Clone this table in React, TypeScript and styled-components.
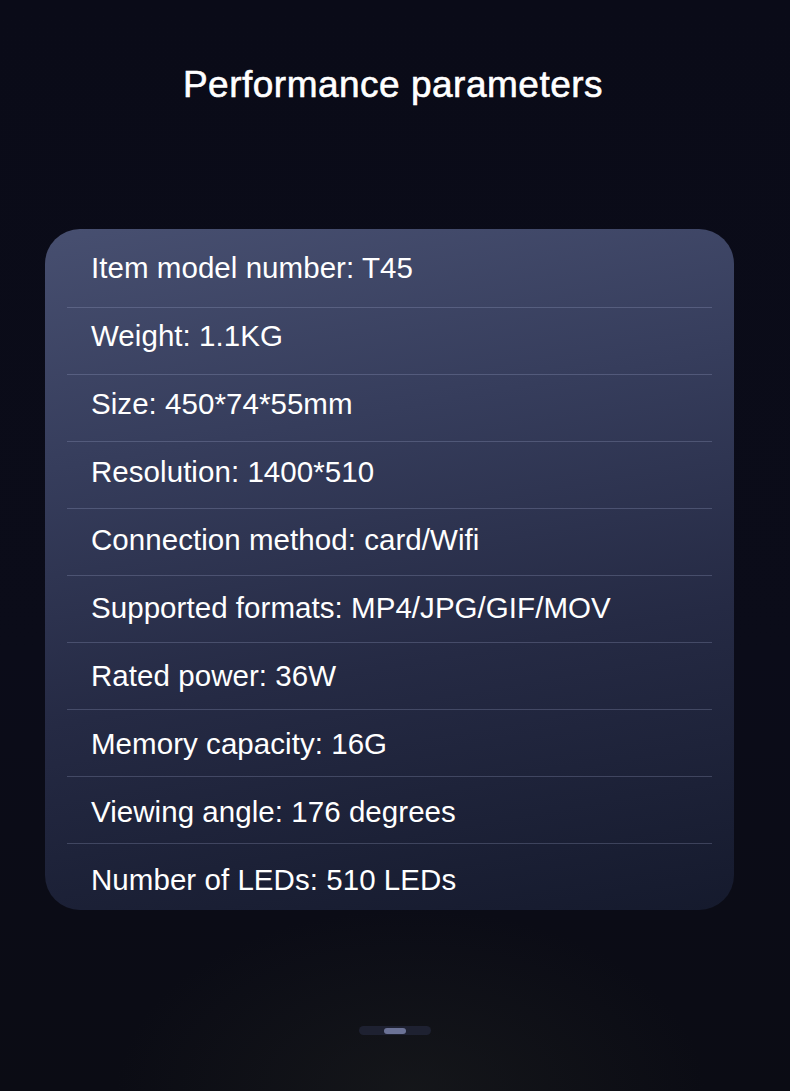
import React from "react";
import styled, { createGlobalStyle } from "styled-components";

const GlobalStyle = createGlobalStyle`
  html, body {
    margin: 0;
    padding: 0;
    background: #0a0b16;
  }
  * { box-sizing: border-box; }
`;

const Page = styled.div`
  width: 790px;
  height: 1091px;
  overflow: hidden;
  padding-top: 65px;
  display: flex;
  flex-direction: column;
  align-items: center;
  font-family: "Liberation Sans", Arial, sans-serif;
  background:
    radial-gradient(ellipse 420px 260px at 52% 100%, rgba(28, 30, 30, 0.55), rgba(0, 0, 0, 0) 70%),
    linear-gradient(180deg, #0a0b18 0%, #0b0c19 60%, #0b0c14 100%);
`;

const Title = styled.h1`
  margin: 0 0 0 -4px;
  font-size: 37px;
  line-height: 40px;
  font-weight: 400;
  color: #ffffff;
  letter-spacing: 0.5px;
  -webkit-text-stroke: 0.6px #ffffff;
`;

const Card = styled.div`
  align-self: flex-start;
  margin: 124px 0 0 45px;
  width: 689px;
  height: 681px;
  border-radius: 35px;
  padding: 12px 22px 0;
  background: linear-gradient(170deg, #474f70 0%, #363d5c 30%, #252a44 62%, #151a2d 100%);
  display: flex;
  flex-direction: column;
`;

const Row = styled.div<{ $index: number; $last?: boolean }>`
  height: 67px;
  flex: none;
  padding: ${(p) => 11 + p.$index}px 0 0 24px;
  font-size: 29.5px;
  line-height: 32px;
  letter-spacing: 0.05px;
  color: #ffffff;
  border-bottom: ${(p) => (p.$last ? "none" : "1px solid rgba(175, 182, 220, 0.24)")};
`;

const Pager = styled.div`
  margin-top: 116px;
  width: 72px;
  height: 9px;
  border-radius: 5px;
  background: #1e2131;
  display: flex;
  align-items: center;
  justify-content: center;
`;

const PagerThumb = styled.div`
  width: 22px;
  height: 6px;
  border-radius: 3px;
  background: #6b7296;
`;

const specs = [
  "Item model number: T45",
  "Weight: 1.1KG",
  "Size: 450*74*55mm",
  "Resolution: 1400*510",
  "Connection method: card/Wifi",
  "Supported formats: MP4/JPG/GIF/MOV",
  "Rated power: 36W",
  "Memory capacity: 16G",
  "Viewing angle: 176 degrees",
  "Number of LEDs: 510 LEDs",
];

export default function App() {
  return (
    <>
      <GlobalStyle />
      <Page>
        <Title>Performance parameters</Title>
        <Card>
          {specs.map((s, i) => (
            <Row key={s} $index={i} $last={i === specs.length - 1}>
              {s}
            </Row>
          ))}
        </Card>
        <Pager>
          <PagerThumb />
        </Pager>
      </Page>
    </>
  );
}
